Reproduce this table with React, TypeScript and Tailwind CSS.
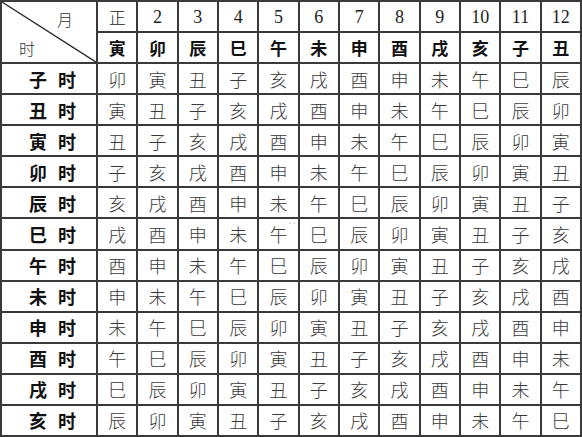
import React from "react";

const B = "子丑寅卯辰巳午未申酉戌亥".split("");
const monthNums = ["正", "2", "3", "4", "5", "6", "7", "8", "9", "10", "11", "12"];
const monthBranches = "寅卯辰巳午未申酉戌亥子丑".split("");

const cjkSans = { fontFamily: '"Noto Sans CJK SC", "Noto Sans", sans-serif' };
const serif = { fontFamily: '"Liberation Serif", "Noto Sans CJK SC", serif' };

export default function App() {
  const cells: React.ReactNode[] = [];
  // header cell spanning two rows
  cells.push(
    <div key="corner" className="relative row-span-2 bg-white flex flex-col justify-between">
      <svg className="absolute inset-0 w-full h-full" viewBox="0 0 94 60" preserveAspectRatio="none">
        <line x1="0" y1="0" x2="94" y2="60" stroke="#2a2a2a" strokeWidth="1.3" />
      </svg>
      <div className="flex justify-end pr-[23px] pt-[9px] text-[16px] leading-none text-[#333] font-light" style={cjkSans}>月</div>
      <div className="flex justify-start pl-[17px] pb-[6px] text-[16px] leading-none text-[#333] font-light" style={cjkSans}>时</div>
    </div>
  );
  monthNums.map((m, i) =>
    cells.push(
      <div key={"m" + i} className="bg-white flex items-center justify-center text-[18px] leading-none text-[#222]" style={m === "正" ? cjkSans : serif}>
        <span className={m === "正" ? "font-light text-[17px]" : ""}>{m}</span>
      </div>
    )
  );
  monthBranches.map((b, i) =>
    cells.push(
      <div key={"b" + i} className="bg-white flex items-center justify-center text-[17px] leading-none font-bold text-[#111]" style={cjkSans}>
        {b}
      </div>
    )
  );
  for (let r = 0; r < 12; r++) {
    cells.push(
      <div key={"r" + r} className="bg-white flex items-center justify-center gap-[11px] pl-[7px] text-[18px] leading-none font-bold text-[#111]" style={cjkSans}>
        <span>{B[r]}</span>
        <span>时</span>
      </div>
    );
    for (let c = 0; c < 12; c++) {
      const idx = (((3 - r - c) % 12) + 12) % 12;
      const extra = r === 5 && c === 4;
      cells.push(
        <div key={r + "-" + c} className="relative bg-white flex items-center justify-center text-[18px] leading-none font-light text-[#3a3a3a]" style={cjkSans}>
          <span className="relative">
            {B[idx]}
            {extra && <span className="absolute -right-[9px] -top-[3px] text-[7px] text-[#777]">ˊˊ</span>}
          </span>
        </div>
      );
    }
  }
  return (
    <div className="w-[582px] h-[437px] bg-white">
      <div className="grid grid-cols-[94px_repeat(12,1fr)] grid-rows-[repeat(14,1fr)] w-[582px] h-[437px] p-[2px] gap-[2px] bg-[#3a3a3a]">
        {cells}
      </div>
    </div>
  );
}
